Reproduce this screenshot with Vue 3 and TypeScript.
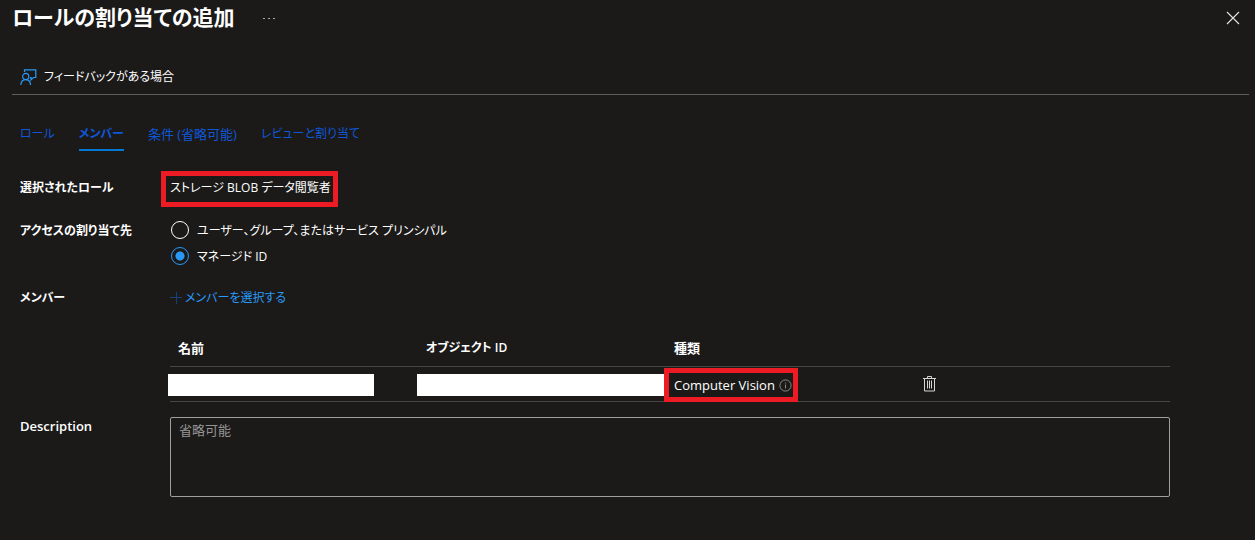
<script setup lang="ts">
import { ref } from 'vue'

interface Tab {
  id: string
  label: string
  mixed?: boolean
}

const tabs: Tab[] = [
  { id: 'role', label: 'ロール' },
  { id: 'members', label: 'メンバー' },
  { id: 'conditions', label: '条件 (省略可能)', mixed: true },
  { id: 'review', label: 'レビューと割り当て' },
]

const activeTab = ref('members')
const assignTo = ref('managed')
const description = ref('')
</script>

<template>
  <main class="blade">
    <header class="head">
      <h1>ロールの割り当ての追加</h1>
      <button class="more" type="button" aria-label="その他">
        <svg width="12" height="4" viewBox="0 0 12 4" fill="#a8a7a6">
          <rect x="0" y="2" width="2" height="1" />
          <rect x="5" y="2" width="2" height="1" />
          <rect x="10" y="2" width="2" height="1" />
        </svg>
      </button>
      <button class="close" type="button" aria-label="閉じる">
        <svg width="14" height="14" viewBox="0 0 14 14" fill="none" stroke="#e6e5e4" stroke-width="1.1">
          <path d="M1 1 13 13M13 1 1 13" />
        </svg>
      </button>
    </header>

    <div class="toolbar">
      <button class="feedback" type="button">
        <svg width="17" height="17" viewBox="0 0 17 17" fill="none" stroke="#2899f5" stroke-width="1.2">
          <path d="M4.500 3V.8h11.300v7.700h-2.300l-2.500 2.300V8.500H10" />
          <circle cx="5.700" cy="7.500" r="3.100" />
          <path d="M.8 16c.2-3.300 2.300-5.400 4.900-5.400s4.700 2.100 4.900 5.400" />
        </svg>
        フィードバックがある場合
      </button>
    </div>

    <nav class="tabs" role="tablist">
      <button
        v-for="tab in tabs"
        :key="tab.id"
        type="button"
        role="tab"
        class="tab"
        :class="{ active: tab.id === activeTab, mixed: tab.mixed }"
        :aria-selected="tab.id === activeTab"
        @click="activeTab = tab.id"
      >
        {{ tab.label }}
      </button>
    </nav>

    <section class="form">
      <div class="row">
        <span class="label">選択されたロール</span>
        <div><span class="marked role">ストレージ BLOB データ閲覧者</span></div>
      </div>

      <div class="row access" role="radiogroup" aria-labelledby="access-label">
        <span id="access-label" class="label">アクセスの割り当て先</span>
        <div class="radios">
          <label class="radio">
            <input v-model="assignTo" type="radio" name="assign" value="user" />
            ユーザー、グループ、またはサービス プリンシパル
          </label>
          <label class="radio">
            <input v-model="assignTo" type="radio" name="assign" value="managed" />
            マネージド ID
          </label>
        </div>
      </div>

      <div class="row members">
        <span class="label">メンバー</span>
        <div>
          <a class="select" href="#">
            <svg width="12" height="12" viewBox="0 0 12 12" stroke="#16407c" fill="none">
              <path d="M6.500 0v12M0 5.500h12" />
            </svg>
            メンバーを選択する
          </a>
          <table>
            <thead>
              <tr>
                <th scope="col">名前</th>
                <th scope="col" class="compact">オブジェクト ID</th>
                <th scope="col">種類</th>
                <th class="action" aria-label="操作"></th>
              </tr>
            </thead>
            <tbody>
              <tr>
                <td><span class="redacted name"></span></td>
                <td><span class="redacted object"></span></td>
                <td>
                  <span class="marked kind">
                    Computer Vision
                    <svg width="13" height="13" viewBox="0 0 13 13" fill="none" stroke="#8a8886">
                      <circle cx="6.500" cy="6.500" r="5.600" />
                      <path d="M6.500 5.500v4M6.500 3.500v1" />
                    </svg>
                  </span>
                </td>
                <td class="action">
                  <button class="delete" type="button" aria-label="削除">
                    <svg width="13" height="16" viewBox="0 0 13 16" fill="none" stroke="#d6d5d4">
                      <path d="M0 2.500h13M4.500 2.500v-2h4v2M1.500 2.500v12.500h10v-12.500M4.500 4.500v8M6.500 4.500v8M8.500 4.500v8" />
                    </svg>
                  </button>
                </td>
              </tr>
            </tbody>
          </table>
        </div>
      </div>

      <div class="row description">
        <label class="label latin" for="description">Description</label>
        <textarea id="description" v-model="description" placeholder="省略可能"></textarea>
      </div>
    </section>
  </main>
</template>

<style>
body {
  margin: 0;
  background: #1b1a19;
}
</style>

<style scoped>
.blade {
  min-height: 100vh;
  box-sizing: border-box;
  background: #1b1a19;
  color: #fff;
  font: 12px/22px "Open Sans", "Noto Sans CJK JP", sans-serif;
  font-feature-settings: "palt";
}
button,
textarea {
  font: inherit;
  font-feature-settings: inherit;
  color: inherit;
}
button {
  display: flex;
  align-items: center;
  padding: 0;
  border: 0;
  background: none;
  cursor: pointer;
}
svg {
  flex: none;
}
.head {
  display: flex;
  align-items: center;
  height: 36px;
  padding: 0 15px 0 12px;
}
h1 {
  margin: 0 0 2px;
  font-size: 21px;
  line-height: 32px;
  font-weight: 600;
}
.more {
  margin-left: 29px;
}
.close {
  margin-left: auto;
}
.toolbar {
  margin: 22px 6px 0 12px;
  padding: 8px 8px 6px;
  border-bottom: 1px solid #605e5c;
}
.feedback {
  gap: 7px;
}
.tabs {
  display: flex;
  gap: 24px;
  margin: 28px 20px 0;
}
.tab {
  padding: 0 0 4px;
  border-bottom: 2px solid transparent;
  color: #0f57d8;
}
.tab.active {
  border-bottom-color: #0078d4;
  font-weight: 700;
}
.form {
  padding: 26px 20px 0;
}
.row {
  display: grid;
  grid-template-columns: 150px minmax(0, 1000px);
}
.label {
  font-weight: 600;
}
.mixed,
.latin {
  font-size: 13px;
}
.marked {
  position: relative;
  display: inline-flex;
  align-items: center;
  gap: 4px;
  white-space: nowrap;
}
.marked::after {
  content: "";
  position: absolute;
  border: 5px solid #ed1c24;
}
.role::after {
  inset: -6px -7px -8px -9px;
}
.kind::after {
  inset: -7px -6px -7px -10px;
}
.access {
  margin-top: 21px;
}
.radios {
  display: grid;
  gap: 4px;
}
.radio {
  display: flex;
  align-items: center;
  gap: 8px;
}
.radio input {
  appearance: none;
  box-sizing: border-box;
  width: 18px;
  height: 18px;
  margin: 0 0 2px 1px;
  border: 1px solid #fff;
  border-radius: 50%;
}
.radio input:checked {
  border-color: #2899f5;
  background: radial-gradient(circle, #2899f5 4px, transparent 5px);
}
.members {
  margin-top: 19px;
}
.select {
  display: inline-flex;
  align-items: center;
  gap: 3px;
  color: #2899f5;
  text-decoration: none;
}
table {
  width: 100%;
  margin-top: 19px;
  border-collapse: collapse;
  table-layout: fixed;
  font-size: 13px;
  line-height: 20px;
}
th,
td {
  height: 34px;
  padding: 0 8px;
  border-bottom: 1px solid #484644;
  text-align: left;
  font-weight: 600;
}
th {
  height: 36px;
}
th.compact {
  font-size: 12px;
}
th.action {
  width: 240px;
}
td {
  position: relative;
  height: 32px;
  padding-top: 2px;
  font-weight: 400;
}
td.action {
  padding: 0 9px;
}
.redacted {
  position: absolute;
  top: 7px;
  height: 22px;
  background: #fff;
}
.name {
  left: -2px;
  width: 206px;
}
.object {
  left: -1px;
  right: 0;
}
.description {
  margin-top: 15px;
}
.description .label {
  line-height: 18px;
}
textarea {
  box-sizing: border-box;
  width: 100%;
  height: 80px;
  padding: 1px 8px;
  border: 1px solid #a19f9d;
  border-radius: 2px;
  background: transparent;
  font-size: 13px;
  resize: none;
}
textarea::placeholder {
  color: #979593;
  opacity: 1;
}
</style>
